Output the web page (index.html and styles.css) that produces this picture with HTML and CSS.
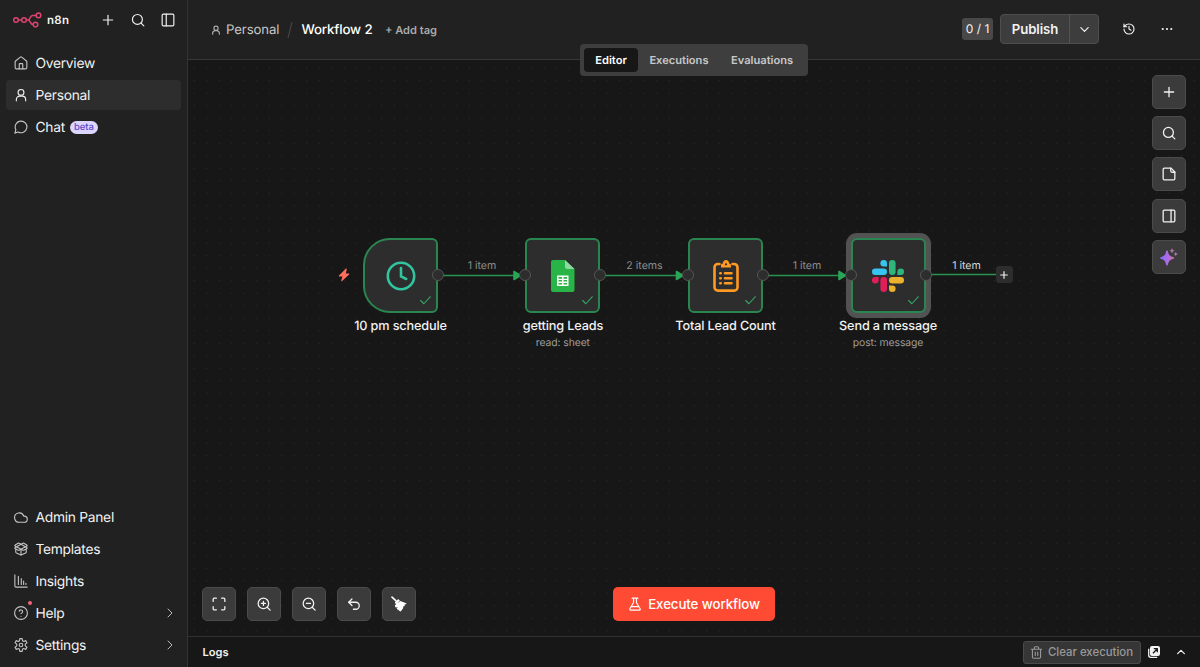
FILE: index.html
```
<!DOCTYPE html>
<html lang="en">
<head>
    <meta charset="UTF-8">
    <meta name="viewport" content="width=device-width, initial-scale=1.0">
    <title>Workflow 2 - n8n</title>
    <link rel="stylesheet" href="styles.css">
</head>
<body>

<!-- icons used more than once -->
<svg width="0" height="0" class="defs">
    <symbol id="user" viewBox="0 0 24 24"><circle cx="12" cy="7.5" r="5"/><path d="M4 22v-2a6 6 0 0 1 6-6h4a6 6 0 0 1 6 6v2"/></symbol>
    <symbol id="plus" viewBox="0 0 24 24"><path d="M4 12h16M12 4v16"/></symbol>
    <symbol id="search" viewBox="0 0 24 24"><circle cx="11" cy="11" r="8.5"/><path d="m22 22-4.7-4.7"/></symbol>
    <symbol id="right" viewBox="0 0 24 24"><path d="m8 4 8 8-8 8"/></symbol>
    <symbol id="check" viewBox="0 0 24 24"><path d="M21 5 9 18l-6-6"/></symbol>
</svg>

<div class="app">
    <aside class="sidebar">
        <div class="brand">
            <svg class="logo" viewBox="0 0 30 16">
                <circle cx="3" cy="8" r="2.3"/><circle cx="11" cy="8" r="2.3"/>
                <circle cx="25.5" cy="3.4" r="2.3"/><circle cx="22.5" cy="12.6" r="2.3"/>
                <path d="M5.3 8h3.4M13.3 8H15c2.8 0 1.4-4.6 4.5-4.6h3.7M15 8c2.8 0 1.8 4.6 5.2 4.6"/>
            </svg>
            <span class="brand-name">n8n</span>
            <div class="brand-actions">
                <svg class="icon"><use href="#plus"/></svg>
                <svg class="icon"><use href="#search"/></svg>
                <svg class="icon" viewBox="0 0 24 24"><rect x="2" y="2" width="20" height="20" rx="2"/><path d="M9 2v20"/></svg>
            </div>
        </div>

        <nav class="menu">
            <a class="menu-item">
                <svg class="icon" viewBox="0 0 24 24"><path d="M15 22v-8a1 1 0 0 0-1-1h-4a1 1 0 0 0-1 1v8"/><path d="M2 10a2 2 0 0 1 .7-1.5l8-6.5a2 2 0 0 1 2.6 0l8 6.5A2 2 0 0 1 22 10v10a2 2 0 0 1-2 2H4a2 2 0 0 1-2-2z"/></svg>
                <span>Overview</span>
            </a>
            <a class="menu-item active">
                <svg class="icon"><use href="#user"/></svg>
                <span>Personal</span>
            </a>
            <a class="menu-item">
                <svg class="icon" viewBox="0 0 24 24"><path d="M7 20.5A10 10 0 1 0 3.2 16.500L1.500 22.500z"/></svg>
                <span>Chat</span>
                <span class="beta">beta</span>
            </a>
        </nav>

        <nav class="menu menu-bottom">
            <a class="menu-item">
                <svg class="icon" viewBox="0 0 24 24"><path d="M17.500 21H9a8 8 0 1 1 7.600-10.500h.9a5.200 5.200 0 1 1 0 10.500z"/></svg>
                <span>Admin Panel</span>
            </a>
            <a class="menu-item">
                <svg class="icon" viewBox="0 0 24 24"><path d="M12 22v-9"/><path d="M15.200 2.200a1.700 1.700 0 0 1 1.700 0L22 5.100a.9.9 0 0 1 0 1.700L8.800 14a1.900 1.900 0 0 1-1.700 0L2 11.200a.9.9 0 0 1 0-1.700z"/><path d="M21 13v4a1.900 1.900 0 0 1-1.100 1.700l-7 3.100a1.900 1.900 0 0 1-1.800 0l-7-3.100A2 2 0 0 1 3 17v-4"/><path d="M22 11.200a.9.9 0 0 0 0-1.700L8.800 2.200a1.900 1.900 0 0 0-1.700 0L2 5.100a.9.9 0 0 0 0 1.700L15.200 14a1.800 1.800 0 0 0 1.700 0z"/></svg>
                <span>Templates</span>
            </a>
            <a class="menu-item">
                <svg class="icon" viewBox="0 0 24 24"><path d="M1.500 1.500v19a2 2 0 0 0 2 2h19M7.500 18V4M12.500 18V8M16.500 18v-6M20.500 18v-2"/></svg>
                <span>Insights</span>
            </a>
            <a class="menu-item">
                <svg class="icon" viewBox="0 0 24 24"><circle cx="12" cy="12" r="11"/><path d="M9 9a3 3 0 0 1 5.900 1c0 2-2.900 3-2.900 3M12 17.500v.1"/></svg>
                <span>Help</span>
                <i class="dot"></i>
                <svg class="icon chevron"><use href="#right"/></svg>
            </a>
            <a class="menu-item">
                <svg class="icon" viewBox="0 0 24 24"><path d="M10 1h4l.4 2.600a2.350 2.350 0 0 0 3.300 1.900l2.400-1 2.100 3.600-2 1.600a2.900 2.900 0 0 0 0 4.600l2 1.600-2.100 3.600-2.400-1a2.350 2.350 0 0 0-3.300 1.900L14 23h-4l-.4-2.600a2.350 2.350 0 0 0-3.300-1.900l-2.400 1-2.100-3.600 2-1.600a2.900 2.900 0 0 0 0-4.600l-2-1.600 2.100-3.600 2.400 1a2.350 2.350 0 0 0 3.300-1.900z"/><circle cx="12" cy="12" r="3"/></svg>
                <span>Settings</span>
                <svg class="icon chevron"><use href="#right"/></svg>
            </a>
        </nav>
    </aside>

    <main class="main">
        <header class="header">
            <div class="crumbs">
                <svg class="icon"><use href="#user"/></svg>
                <span class="crumb">Personal</span>
                <svg class="slash" viewBox="0 0 6 16"><path d="M5 0 1 16"/></svg>
                <span class="title">Workflow 2</span>
                <span class="add-tag">+ Add tag</span>
            </div>
            <div class="header-actions">
                <span class="count">0 / 1</span>
                <div class="publish">
                    <button class="publish-main">Publish</button>
                    <button class="publish-more"><svg class="icon" viewBox="0 0 24 24"><path d="m4 8 8 8 8-8"/></svg></button>
                </div>
                <svg class="icon history" viewBox="0 0 24 24"><path d="M2 12a10 10 0 1 0 10-10 10.800 10.800 0 0 0-7.500 3L2 7.500"/><path d="M2 2v5.500h5.500M12 6.500V12l4 2.500"/></svg>
                <svg class="icon more" viewBox="0 0 24 24"><circle cx="3.500" cy="12" r="2.200"/><circle cx="12" cy="12" r="2.200"/><circle cx="20.500" cy="12" r="2.200"/></svg>
            </div>
            <div class="tabs">
                <span class="tab selected">Editor</span>
                <span class="tab">Executions</span>
                <span class="tab">Evaluations</span>
            </div>
        </header>

        <section class="canvas">
            <svg class="edges" viewBox="0 0 1012 576">
                <path d="M250 215.500h80M413 215.500h80M575 215.500h80M738 214.500h70"/>
                <path class="arrow" d="M326 211.500v8l6.500-4zM488.500 211.500v8l6.500-4zM651 211.500v8l6.500-4z"/>
            </svg>
            <span class="edge-label l1">1 item</span>
            <span class="edge-label l2">2 items</span>
            <span class="edge-label l3">1 item</span>
            <span class="edge-label l4">1 item</span>
            <svg class="bolt" viewBox="0 0 12 14"><path d="M7.700.8 1 7.500c-.4.5-.1 1 .4 1h3L3.200 12.800c-.1.5.5.7.9.3l7-6.600c.4-.4.1-1-.5-1H7.800l1-4.200c.1-.6-.6-.9-1.100-.5z"/></svg>

            <div class="node trigger n1">
                <div class="box">
                    <svg class="clock" viewBox="0 0 30 30"><circle cx="15" cy="15" r="13.200"/><path d="M15 7v8.400l5.200 2.600"/></svg>
                    <svg class="icon check"><use href="#check"/></svg>
                    <i class="port out"></i>
                </div>
                <div class="name">10 pm schedule</div>
            </div>

            <div class="node n2">
                <div class="box">
                    <svg class="sheets" viewBox="0 0 24 32">
                        <path fill="#28b446" d="M2 0h12l9.500 9v21a2 2 0 0 1-2 2H2a2 2 0 0 1-2-2V2a2 2 0 0 1 2-2z"/>
                        <path fill="#8fd9a0" d="M14 0v7a2 2 0 0 0 2 2h7.500z"/>
                        <path fill="#fff" fill-rule="evenodd" d="M6 15.500h11.500v10.500H6zM7.500 17v1.700h3.500V17zM12.500 17v1.700H16V17zM7.500 20v1.600h3.500V20zM12.500 20v1.600H16V20zM7.500 23v1.600h3.500V23zM12.500 23v1.600H16V23z"/>
                    </svg>
                    <svg class="icon check"><use href="#check"/></svg>
                    <i class="port in"></i>
                    <i class="port out"></i>
                </div>
                <div class="name">getting Leads</div>
                <div class="sub">read: sheet</div>
            </div>

            <div class="node n3">
                <div class="box">
                    <svg class="clipboard" viewBox="0 0 26 32">
                        <path d="M6.500 4H4.800a3.300 3.300 0 0 0-3.300 3.300v20a3.300 3.300 0 0 0 3.300 3.300h16.400a3.300 3.300 0 0 0 3.300-3.300v-20A3.300 3.300 0 0 0 21.200 4h-1.700"/>
                        <path d="M12 13.300h6.500M12 18.300h6.500M12 23.300h6.500M7.300 13.300h.4M7.300 18.300h.4M7.300 23.300h.4"/>
                        <path class="clip" fill-rule="evenodd" d="M8 7.500V5.300c0-1 .8-1.800 1.800-1.800C10 1.500 11.300 0 13 0s3 1.500 3.200 3.500c1 0 1.800.8 1.800 1.800v2.200zM11.900 4.300a1.100 1.100 0 1 0 2.200 0 1.100 1.100 0 1 0-2.200 0z"/>
                    </svg>
                    <svg class="icon check"><use href="#check"/></svg>
                    <i class="port in"></i>
                    <i class="port out"></i>
                </div>
                <div class="name">Total Lead Count</div>
            </div>

            <div class="node picked n4">
                <div class="box">
                    <svg class="slack" viewBox="0 0 32 32">
                        <g fill="#36c5f0"><rect x="0" y="8.400" width="15" height="6.600" rx="3.300"/><path d="M11.700 0A3.300 3.300 0 1 0 11.700 6.600H15V3.300A3.300 3.300 0 0 0 11.700 0z"/></g>
                        <g fill="#2eb67d"><rect x="17" y="0" width="6.600" height="15" rx="3.300"/><path d="M32 11.700A3.300 3.300 0 1 0 25.400 11.700V15h3.300A3.300 3.300 0 0 0 32 11.700z"/></g>
                        <g fill="#ecb22e"><rect x="17" y="17" width="15" height="6.600" rx="3.300"/><path d="M20.300 32a3.300 3.300 0 1 0 0-6.600H17v3.300a3.300 3.300 0 0 0 3.300 3.300z"/></g>
                        <g fill="#e01e5a"><rect x="8.400" y="17" width="6.600" height="15" rx="3.300"/><path d="M0 20.300a3.300 3.300 0 1 0 6.600 0V17H3.300A3.300 3.300 0 0 0 0 20.300z"/></g>
                    </svg>
                    <svg class="icon check"><use href="#check"/></svg>
                    <i class="port in"></i>
                    <i class="port out"></i>
                </div>
                <div class="name">Send a message</div>
                <div class="sub">post: message</div>
            </div>

            <div class="add-next"><svg class="icon"><use href="#plus"/></svg></div>

            <div class="side-tools">
                <button class="tool"><svg class="icon"><use href="#plus"/></svg></button>
                <button class="tool"><svg class="icon"><use href="#search"/></svg></button>
                <button class="tool"><svg class="icon" viewBox="0 0 24 24"><path d="M15.500 2H4a2 2 0 0 0-2 2v16a2 2 0 0 0 2 2h16a2 2 0 0 0 2-2V8.500z"/><path d="M15 2v5a2 2 0 0 0 2 2h5"/></svg></button>
                <button class="tool"><svg class="icon" viewBox="0 0 24 24"><rect x="2" y="2" width="20" height="20" rx="2"/><path d="M15.500 2v20"/></svg></button>
                <button class="tool">
                    <svg class="sparkle" viewBox="0 0 18 18">
                        <defs><linearGradient id="ai" x1="0" y1="0" x2="1" y2="0"><stop offset="0" stop-color="#8668ff"/><stop offset=".6" stop-color="#b06ce0"/><stop offset="1" stop-color="#c9708a"/></linearGradient></defs>
                        <path fill="url(#ai)" d="M7 2.500c.6 0 .8.400 1 1.200.8 3.200 1.700 4.400 5.100 5.200.8.200 1.200.5 1.200 1s-.4.800-1.200 1c-3.400.8-4.300 2-5.100 5.300-.2.800-.4 1.300-1 1.300s-.8-.5-1-1.300c-.8-3.300-1.700-4.500-4.900-5.300C.4 10.700 0 10.400 0 9.900s.4-.8 1.100-1C4.300 8.100 5.200 6.900 6 3.700c.2-.8.400-1.200 1-1.200z"/>
                        <path fill="#b07aa8" d="m12 0 .8 1.900 1.900.8-1.900.8-.8 1.900-.8-1.900-1.900-.8 1.900-.8zM15.700 3.900l.7 1.400 1.500.7-1.500.7-.7 1.500-.7-1.500-1.400-.7 1.400-.7z"/>
                    </svg>
                </button>
            </div>

            <div class="bottom-tools">
                <button class="tool"><svg class="icon" viewBox="0 0 24 24"><path d="M2 7.500V4a2 2 0 0 1 2-2h3.500M16.500 2H20a2 2 0 0 1 2 2v3.500M22 16.500V20a2 2 0 0 1-2 2h-3.500M7.500 22H4a2 2 0 0 1-2-2v-3.500"/></svg></button>
                <button class="tool"><svg class="icon" viewBox="0 0 24 24"><circle cx="11" cy="11" r="9"/><path d="m22.500 22.500-5-5M11 7.500v7M7.500 11h7"/></svg></button>
                <button class="tool"><svg class="icon" viewBox="0 0 24 24"><circle cx="11" cy="11" r="9"/><path d="m22.500 22.500-5-5M7.500 11h7"/></svg></button>
                <button class="tool"><svg class="icon" viewBox="0 0 24 24"><path d="M8.500 14.500 3 9l5.500-5.500"/><path d="M3 9h12a6 6 0 0 1 0 12h-4"/></svg></button>
                <button class="tool"><svg class="broom" viewBox="0 0 16 16"><path d="M1 1.100l3.800 3.600" stroke="#fff" stroke-width="1.600" stroke-linecap="round"/><path d="M4 6.300 6.700 3.400c.3-.3.700-.3 1 0L8.900 4.600 5.300 8.200 4 7.100c-.2-.3-.2-.5 0-.8zM9.300 4.900l5.900 2.300c.4.200.4.600.1.800l-1.700.6.2 1.500-1.700.3.200 1.600-2.400 3.200c-.2.300-.6.300-.9.100l-3.400-2.600 1.200-1.500-2 .4-.9-1.700c-.1-.3-.1-.6.200-.9z"/></svg></button>
            </div>

            <button class="execute">
                <svg class="icon" viewBox="0 0 24 24"><path d="M14.500 2v7a2 2 0 0 0 .2.900l6.100 10.200a1.600 1.600 0 0 1-1.400 2.400H4.600a1.600 1.600 0 0 1-1.400-2.400L9.300 9.900a2 2 0 0 0 .2-.9V2M7 2h10M6 16.500h12"/></svg>
                Execute workflow
            </button>
        </section>

        <footer class="logs">
            <span class="logs-title">Logs</span>
            <button class="clear">
                <svg class="icon" viewBox="0 0 24 24"><path d="M2.500 6h19M19.500 6v14.500a2 2 0 0 1-2 2h-11a2 2 0 0 1-2-2V6M8 6V3.500a2 2 0 0 1 2-2h4a2 2 0 0 1 2 2V6M9.700 11v6.500M14.300 11v6.500"/></svg>
                Clear execution
            </button>
            <svg class="popout" viewBox="0 0 12 12"><rect x="2" y="0" width="10" height="10" rx="2"/><path d="M.7 2.800v6.500a2 2 0 0 0 2 2h6.500"/><path class="dark" d="M5 7.200 9 3M5.800 2.700h3.500v3.500"/></svg>
            <svg class="icon collapse" viewBox="0 0 24 24"><path d="m4 16 8-8 8 8"/></svg>
        </footer>
    </main>
</div>

</body>
</html>
```
FILE: styles.css
```
* {
    box-sizing: border-box;
}

body {
    margin: 0;
    background: #171717;
    color: #f2f2f2;
    font-family: Inter, "Liberation Sans", sans-serif;
    font-size: 14px;
    text-rendering: geometricPrecision;
    overflow: hidden;
}

button {
    font: inherit;
    color: inherit;
    border: none;
    padding: 0;
    cursor: pointer;
}

.defs {
    position: absolute;
}

.icon {
    width: 14px;
    height: 14px;
    flex: none;
    fill: none;
    stroke: currentColor;
    stroke-width: 2;
    stroke-linecap: round;
    stroke-linejoin: round;
}

.app {
    display: flex;
    height: 667px;
}

/* sidebar */
.sidebar {
    width: 188px;
    flex: none;
    display: flex;
    flex-direction: column;
    background: #212121;
    border-right: 1px solid #333;
}

.brand {
    display: flex;
    align-items: center;
    height: 40px;
    padding: 0 12px 0 13px;
}

.logo {
    width: 30px;
    height: 16px;
    fill: none;
    stroke: #dd4470;
    stroke-width: 1.5;
}

.brand-name {
    margin-left: 4px;
    font-size: 11.5px;
    font-weight: 600;
    letter-spacing: 0.3px;
}

.brand-actions {
    display: flex;
    gap: 16px;
    margin-left: auto;
}

.menu {
    display: flex;
    flex-direction: column;
    gap: 2px;
    padding: 8px 6px 0;
}

.menu-bottom {
    margin-top: auto;
    padding: 0 6px 7px;
}

.menu-item {
    position: relative;
    display: flex;
    align-items: center;
    height: 30px;
    padding: 0 5px 0 7.5px;
    gap: 8px;
    border-radius: 4px;
    font-size: 13.8px;
    letter-spacing: -0.28px;
    line-height: 18px;
}

.menu-item .icon {
    color: #c4c4c4;
    stroke-width: 1.9;
}

.menu-item .icon + span {
    padding-top: 2px;
}

.menu-item.active {
    background: #2d2d2d;
}

.menu-item.active .icon {
    color: #f2f2f2;
}

.beta {
    height: 13px;
    margin-left: -3px;
    padding: 0 4px;
    border-radius: 7px;
    background: #dcd6ff;
    color: #5f46c8;
    font-size: 9.5px;
    font-weight: 500;
    letter-spacing: 0;
    line-height: 13px;
}

.dot {
    position: absolute;
    left: 22px;
    top: 3px;
    width: 4px;
    height: 4px;
    border-radius: 50%;
    background: #f0647c;
}

.menu-item .chevron {
    width: 12px;
    height: 12px;
    margin-left: auto;
}

/* header */
.main {
    flex: 1;
    display: flex;
    flex-direction: column;
    min-width: 0;
}

.header {
    position: relative;
    display: flex;
    align-items: center;
    justify-content: space-between;
    height: 60px;
    padding: 0 27px 0 23px;
    background: #212121;
    border-bottom: 1px solid #373737;
}

.crumbs {
    display: flex;
    align-items: center;
}

.crumbs .icon {
    width: 10px;
    height: 10px;
    margin-right: 5px;
    color: #bbb;
    stroke-width: 2.5;
}

.crumb {
    font-size: 13.2px;
    letter-spacing: -0.1px;
    color: #c6c6c6;
}

.slash {
    width: 6px;
    height: 16px;
    margin: 0 8px;
    fill: none;
    stroke: #4c4c4c;
}

.title {
    padding-top: 1px;
    font-size: 13.3px;
    font-weight: 500;
    letter-spacing: -0.15px;
    line-height: 18px;
    color: #fff;
}

.add-tag {
    margin-left: 12.5px;
    font-size: 11.1px;
    font-weight: 600;
    color: #aaa;
}

.header-actions {
    display: flex;
    align-items: center;
    margin-top: -1px;
}

.count {
    width: 31px;
    height: 22px;
    margin-right: 7px;
    border-radius: 3px;
    background: #484848;
    font-size: 12px;
    line-height: 22px;
    text-align: center;
}

.publish {
    display: flex;
    width: 99px;
    height: 30px;
    border: 1px solid #4e4e4e;
    border-radius: 4px;
    background: #3d3d3d;
}

.publish button {
    background: none;
}

.publish .publish-main {
    flex: 1;
    font-size: 13.2px;
    font-weight: 600;
    letter-spacing: -0.1px;
}

.publish .publish-more {
    display: flex;
    align-items: center;
    justify-content: center;
    width: 29px;
    border-left: 1px solid #545454;
}

.publish-more .icon {
    width: 11px;
    height: 11px;
    stroke-width: 2.6;
}

.history {
    width: 12px;
    height: 12px;
    margin-left: 24px;
    stroke-width: 2.3;
}

.more {
    width: 12px;
    height: 12px;
    margin-left: 26px;
    fill: currentColor;
    stroke: none;
}

.tabs {
    position: absolute;
    left: 392px;
    top: 44px;
    z-index: 2;
    display: flex;
    width: 228px;
    height: 32px;
    padding: 4px;
    border-radius: 4px;
    background: #3e3e3e;
}

.tab {
    padding: 0 11.3px;
    border-radius: 4px;
    color: #c8c8c8;
    font-size: 11.1px;
    font-weight: 600;
    line-height: 25px;
}

.tab.selected {
    background: #171717;
    color: #fff;
}

/* canvas */
.canvas {
    position: relative;
    height: 576px;
    background: #171717 radial-gradient(circle, #2b2b2b 0.6px, transparent 1px) 0 2px / 12.5px 12.5px;
}

.edges {
    position: absolute;
    left: 0;
    top: 0;
    width: 1012px;
    height: 576px;
    fill: none;
    stroke: #27934f;
    stroke-width: 1.6;
}

.edges .arrow {
    fill: #2aa457;
    stroke: #2aa457;
    stroke-width: 1.6;
    stroke-linejoin: round;
}

.edge-label {
    position: absolute;
    top: 199px;
    width: 60px;
    color: #8c8c8c;
    font-size: 10.6px;
    line-height: 14px;
    text-align: center;
}

.l1 { left: 264px; }
.l2 { left: 426.5px; }
.l3 { left: 589px; }
.l4 { left: 748.5px; color: #d8d8d8; }

.bolt {
    position: absolute;
    left: 150px;
    top: 207.5px;
    width: 12px;
    height: 14px;
    fill: #ff6f5e;
}

.node {
    position: absolute;
    top: 178px;
    width: 75px;
    display: flex;
    flex-direction: column;
    align-items: center;
    white-space: nowrap;
}

.n1 { left: 175px; }
.n2 { left: 337.4px; }
.n3 { left: 500px; }
.n4 { left: 662.5px; }

.box {
    position: relative;
    display: flex;
    align-items: center;
    justify-content: center;
    width: 75px;
    height: 75px;
    border: 2px solid #2a8650;
    border-radius: 6px;
    background: #2d2d2d;
}

.trigger .box {
    border-radius: 27px 6px 6px 27px;
}

.picked .box {
    box-shadow: 0 0 0 5px #525252;
}

.box .check {
    position: absolute;
    right: 4px;
    bottom: 4px;
    width: 13px;
    height: 13px;
    color: #36a567;
}

.port {
    position: absolute;
    top: 29.4px;
    width: 12px;
    height: 12px;
    border: 1px solid #565656;
    border-radius: 50%;
    background: #2d2d2d;
}

.port.in {
    left: -8px;
}

.port.out {
    right: -8px;
}

.name {
    margin-top: 6px;
    font-size: 12.7px;
    font-weight: 500;
    letter-spacing: -0.15px;
    line-height: 15px;
}

.sub {
    margin-top: 2px;
    color: #9b9b9b;
    font-size: 10.4px;
    letter-spacing: -0.1px;
    line-height: 14px;
}

.clock {
    width: 30px;
    height: 30px;
    fill: none;
    stroke: #31c49f;
    stroke-width: 2.6;
    stroke-linecap: round;
    stroke-linejoin: round;
}

.sheets {
    width: 24px;
    height: 32px;
}

.clipboard {
    width: 26px;
    height: 32px;
    fill: none;
    stroke: #ff9922;
    stroke-width: 2.6;
    stroke-linecap: round;
}

.clipboard .clip {
    fill: #ff9922;
    stroke: none;
}

.slack {
    width: 32px;
    height: 32px;
}

.add-next {
    position: absolute;
    left: 807.5px;
    top: 206px;
    display: flex;
    align-items: center;
    justify-content: center;
    width: 17px;
    height: 17px;
    border-radius: 3px;
    background: #2d2d2d;
}

.add-next .icon {
    width: 10px;
    height: 10px;
    stroke-width: 2.8;
}

.side-tools {
    position: absolute;
    right: 14px;
    top: 15px;
    display: flex;
    flex-direction: column;
    gap: 7.2px;
}

.bottom-tools {
    position: absolute;
    left: 14.4px;
    bottom: 15px;
    display: flex;
    gap: 11px;
}

.tool {
    display: flex;
    align-items: center;
    justify-content: center;
    width: 34px;
    height: 34px;
    border: 1px solid #4b4b4b;
    border-radius: 5px;
    background: #3b3b3b;
}

.tool .icon {
    width: 14px;
    height: 14px;
    stroke-width: 2.2;
}

.sparkle {
    width: 18px;
    height: 18px;
}

.broom {
    width: 16px;
    height: 16px;
    fill: #fff;
}

.execute {
    position: absolute;
    left: 425px;
    bottom: 15px;
    display: flex;
    align-items: center;
    justify-content: center;
    gap: 6px;
    width: 162px;
    height: 34px;
    border-radius: 5px;
    background: #ff4b33;
    color: #fff;
    font-size: 13.3px;
    font-weight: 500;
    letter-spacing: -0.1px;
}

/* logs */
.logs {
    display: flex;
    align-items: center;
    height: 31px;
    padding: 0 14.5px;
    border-top: 1px solid #303030;
}

.logs-title {
    font-size: 11.1px;
    font-weight: 600;
}

.clear {
    display: flex;
    align-items: center;
    justify-content: center;
    gap: 5px;
    width: 118px;
    height: 23px;
    margin-left: auto;
    border: 1px solid #4a4a4a;
    border-radius: 3px;
    background: #363636;
    color: #999;
    font-size: 11.4px;
    font-weight: 500;
}

.clear .icon {
    width: 13px;
    height: 13px;
}

.popout {
    width: 12px;
    height: 12px;
    margin-left: 7px;
    fill: #f2f2f2;
}

.popout path {
    fill: none;
    stroke: #f2f2f2;
    stroke-width: 1.3;
}

.popout .dark {
    stroke: #171717;
}

.collapse {
    width: 10px;
    height: 10px;
    margin-left: 16px;
    stroke-width: 3;
}
```
